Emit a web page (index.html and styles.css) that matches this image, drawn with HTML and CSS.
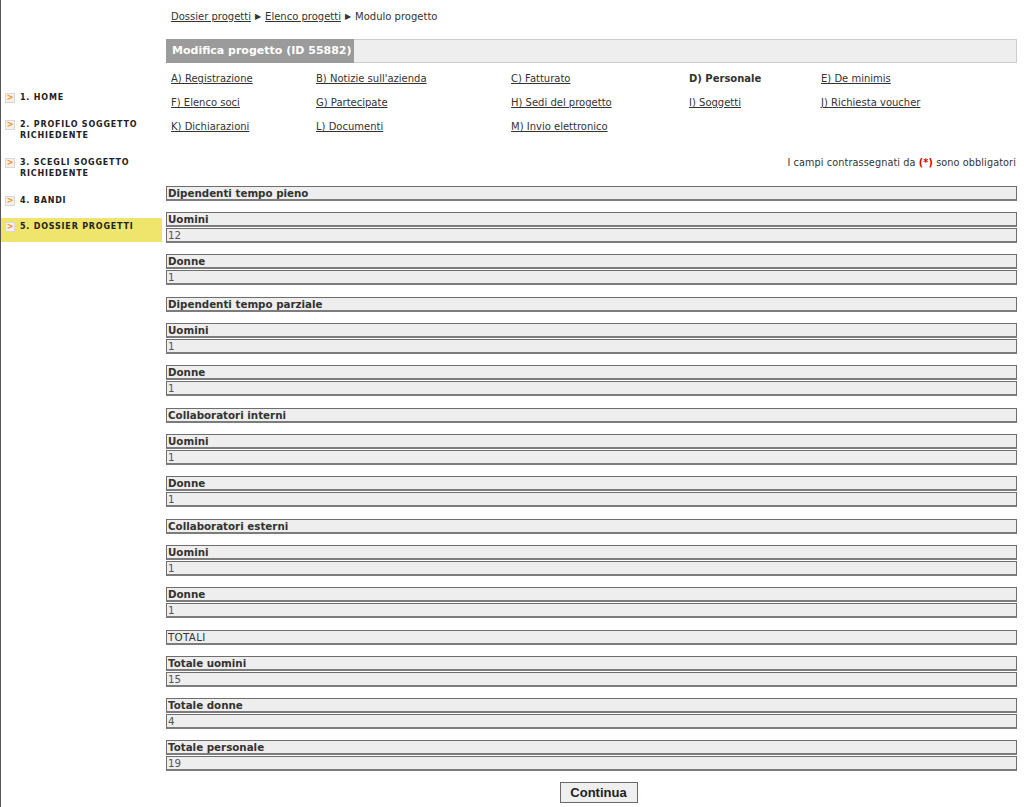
FILE: index.html
```html
<!DOCTYPE html>
<html lang="it">
<head>
<meta charset="utf-8">
<title>Modifica progetto</title>
<link rel="stylesheet" href="styles.css">
</head>
<body>
<div class="page">
  <nav class="sidebar">
    <ul class="menu">
      <li class="menu-item"><span class="arrow">&gt;</span><span class="menu-text">1. HOME</span></li>
      <li class="menu-item"><span class="arrow">&gt;</span><span class="menu-text">2. PROFILO SOGGETTO RICHIEDENTE</span></li>
      <li class="menu-item"><span class="arrow">&gt;</span><span class="menu-text">3. SCEGLI SOGGETTO RICHIEDENTE</span></li>
      <li class="menu-item"><span class="arrow">&gt;</span><span class="menu-text">4. BANDI</span></li>
      <li class="menu-item active"><span class="arrow">&gt;</span><span class="menu-text">5. DOSSIER PROGETTI</span></li>
    </ul>
  </nav>
  <main class="main">
    <div class="breadcrumb">
      <a href="#">Dossier progetti</a><span class="sep">&#9654;</span><a href="#">Elenco progetti</a><span class="sep">&#9654;</span><span>Modulo progetto</span>
    </div>
    <div class="titlebar"><h1 class="title">Modifica progetto (ID 55882)</h1></div>
    <div class="tabs">
      <a href="#">A) Registrazione</a>
      <a href="#">B) Notizie sull'azienda</a>
      <a href="#">C) Fatturato</a>
      <span class="current">D) Personale</span>
      <a href="#">E) De minimis</a>
      <a href="#">F) Elenco soci</a>
      <a href="#">G) Partecipate</a>
      <a href="#">H) Sedi del progetto</a>
      <a href="#">I) Soggetti</a>
      <a href="#">J) Richiesta voucher</a>
      <a href="#">K) Dichiarazioni</a>
      <a href="#">L) Documenti</a>
      <a href="#">M) Invio elettronico</a>
    </div>
    <p class="required">I campi contrassegnati da <span class="star">(*)</span> sono obbligatori</p>

    <section class="section">
      <div class="box sec-title">Dipendenti tempo pieno</div>
      <div class="field"><div class="box label">Uomini</div><div class="box value">12</div></div>
      <div class="field"><div class="box label">Donne</div><div class="box value">1</div></div>
    </section>
    <section class="section">
      <div class="box sec-title">Dipendenti tempo parziale</div>
      <div class="field"><div class="box label">Uomini</div><div class="box value">1</div></div>
      <div class="field"><div class="box label">Donne</div><div class="box value">1</div></div>
    </section>
    <section class="section">
      <div class="box sec-title">Collaboratori interni</div>
      <div class="field"><div class="box label">Uomini</div><div class="box value">1</div></div>
      <div class="field"><div class="box label">Donne</div><div class="box value">1</div></div>
    </section>
    <section class="section">
      <div class="box sec-title">Collaboratori esterni</div>
      <div class="field"><div class="box label">Uomini</div><div class="box value">1</div></div>
      <div class="field"><div class="box label">Donne</div><div class="box value">1</div></div>
    </section>
    <section class="section">
      <div class="box sec-title plain">TOTALI</div>
      <div class="field"><div class="box label">Totale uomini</div><div class="box value">15</div></div>
      <div class="field"><div class="box label">Totale donne</div><div class="box value">4</div></div>
      <div class="field"><div class="box label">Totale personale</div><div class="box value">19</div></div>
    </section>
    <div class="actions"><button class="btn" type="button">Continua</button></div>
  </main>
</div>
</body>
</html>
```

FILE: styles.css
```css
html, body {
  margin: 0;
  padding: 0;
  background: #ffffff;
}
body {
  font-family: "DejaVu Sans", Verdana, sans-serif;
  color: #333333;
  min-height: 807px;
}
.page {
  display: flex;
  align-items: flex-start;
  border-left: 1px solid #555555;
  min-height: 807px;
  box-sizing: border-box;
}
.sidebar {
  width: 161px;
  flex: none;
  padding-top: 84px;
}
.menu {
  list-style: none;
  margin: 0;
  padding: 0;
}
.menu-item {
  display: flex;
  align-items: flex-start;
  padding: 8px 0 8px 4px;
  font-size: 8px;
  font-weight: bold;
  line-height: 11px;
  letter-spacing: 0.8px;
  color: #222222;
}
.menu-item.active {
  background: #efe46c;
  margin-top: 4px;
  padding-top: 3px;
  padding-bottom: 10px;
}
.arrow {
  flex: none;
  width: 8px;
  height: 8px;
  margin: 1px 5px 0 0;
  border: 1px solid #d8d8d8;
  background: #f6f1e4;
  color: #f08a1c;
  font-size: 8px;
  line-height: 8px;
  text-align: center;
  letter-spacing: 0;
}
.menu-text {
  display: block;
}
.main {
  width: 851px;
  margin-left: 4px;
  flex: none;
}
.breadcrumb {
  padding: 10px 0 0 5px;
  height: 39px;
  box-sizing: border-box;
  font-size: 10px;
  line-height: 13px;
  color: #333333;
}
.breadcrumb a {
  color: #333333;
}
.breadcrumb .sep {
  font-size: 8px;
  margin: 0 4px;
  vertical-align: 1px;
}
.titlebar {
  height: 24px;
  background: #eeeeee;
  border: 1px solid #cccccc;
  box-sizing: border-box;
  display: flex;
}
.title {
  margin: -1px 0 -1px -1px;
  background: #9b9b9b;
  color: #ffffff;
  font-size: 11px;
  font-weight: bold;
  line-height: 24px;
  padding: 0 6px;
  width: 188px;
  box-sizing: border-box;
  white-space: nowrap;
}
.tabs {
  display: grid;
  grid-template-columns: 145px 195px 178px 132px 1fr;
  padding: 9px 0 0 5px;
  row-gap: 11px;
  font-size: 10px;
  line-height: 13px;
}
.tabs a {
  color: #333333;
}
.tabs .current {
  font-weight: bold;
}
.required {
  margin: 24px 1px 0 0;
  text-align: right;
  font-size: 9.7px;
  line-height: 12px;
  letter-spacing: 0.1px;
}
.star {
  color: #e00000;
  font-weight: bold;
}
.section {
  margin-top: 12px;
}
.section:first-of-type {
  margin-top: 17px;
}
.box {
  height: 15px;
  box-sizing: border-box;
  background: #eeeeee;
  border: 1px solid #6e6e6e;
  border-bottom: 2px solid #7c7c7c;
  padding: 0 1px;
  font-size: 10.3px;
  line-height: 12px;
  color: #333333;
  white-space: nowrap;
}
.sec-title,
.label {
  font-weight: bold;
}
.sec-title.plain {
  font-weight: normal;
  letter-spacing: 0.3px;
}
.field {
  margin-top: 11px;
}
.label {
  margin-bottom: 1px;
}
.value {
  color: #555555;
  font-weight: normal;
}
.actions {
  display: flex;
  justify-content: center;
  padding: 11px 0 0 14px;
}
.btn {
  width: 78px;
  height: 21px;
  font-family: "Liberation Sans", Arial, sans-serif;
  font-size: 13px;
  font-weight: bold;
  color: #222222;
  background: #efefef;
  border: 1px solid #6a6a6a;
  padding: 0;
}
```
